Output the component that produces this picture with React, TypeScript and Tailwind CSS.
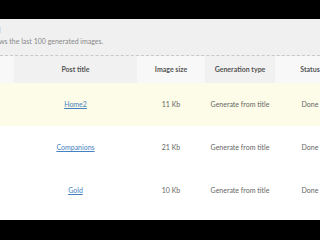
import React from "react";

const rows = [
  { title: "Home2", size: "11 Kb", type: "Generate from title", status: "Done", hl: true },
  { title: "Companions", size: "21 Kb", type: "Generate from title", status: "Done", hl: false },
  { title: "Gold", size: "10 Kb", type: "Generate from title", status: "Done", hl: false },
];

export default function App() {
  return (
    <div
      className="w-[320px] h-[240px] overflow-hidden bg-black flex flex-col"
      style={{ fontFamily: 'Lato, "Open Sans", sans-serif' }}
    >
      <div className="h-[19px] shrink-0 bg-black" />
      <div className="h-[201px] shrink-0 bg-white flex flex-col overflow-hidden">
        <div className="h-[37px] shrink-0 bg-[#f0f0f0] border-b border-dashed border-[#c8c8c8] relative">
          <div className="absolute left-[-1px] top-[8px] text-[7px] text-[#aaa] leading-none">l</div>
          <div className="absolute left-[-1px] top-[19px] text-[7px] text-[#888] leading-none whitespace-nowrap">
            ws the last 100 generated images.
          </div>
        </div>
        <div className="flex h-[27px] shrink-0 text-[7px] font-bold text-[#555] whitespace-nowrap">
          <div className="w-[14px] shrink-0 bg-[#f8f8f8]" />
          <div className="w-[123px] shrink-0 bg-[#f1f1f1] flex items-center justify-center">Post title</div>
          <div className="w-[68px] shrink-0 bg-[#f8f8f8] flex items-center justify-center">Image size</div>
          <div className="w-[70px] shrink-0 bg-[#f1f1f1] flex items-center justify-center">Generation type</div>
          <div className="w-[70px] shrink-0 bg-[#f8f8f8] flex items-center justify-center">Status</div>
        </div>
        {rows.map((r) => (
          <div
            key={r.title}
            className={`flex h-[43px] shrink-0 text-[7px] text-[#666] whitespace-nowrap ${r.hl ? "bg-[#fdfce8]" : "bg-white"}`}
          >
            <div className="w-[14px] shrink-0" />
            <div className="w-[123px] shrink-0 flex items-center justify-center">
              <span className="text-[#4682bf] underline">{r.title}</span>
            </div>
            <div className="w-[68px] shrink-0 flex items-center justify-center">{r.size}</div>
            <div className="w-[70px] shrink-0 flex items-center justify-center">{r.type}</div>
            <div className="w-[70px] shrink-0 flex items-center justify-center">{r.status}</div>
          </div>
        ))}
      </div>
    </div>
  );
}
